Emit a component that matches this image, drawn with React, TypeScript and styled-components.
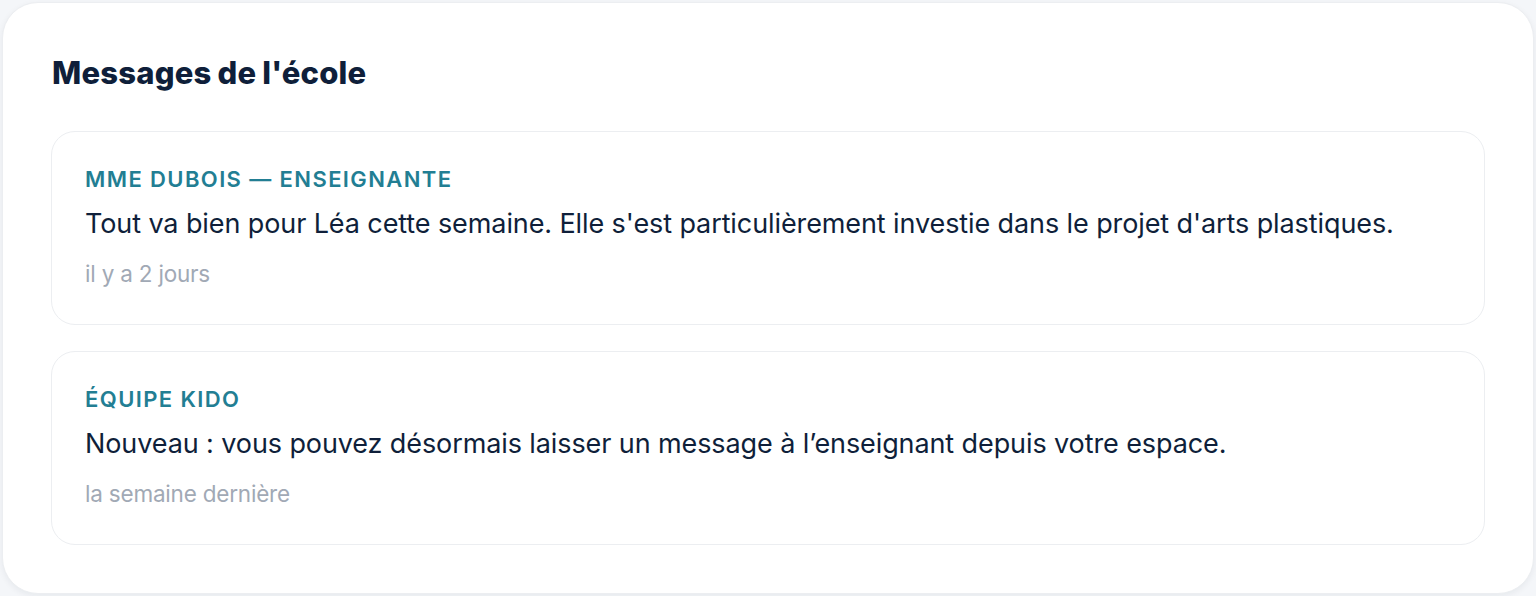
import React from "react";
import styled, { createGlobalStyle } from "styled-components";

const Global = createGlobalStyle`
  html, body { margin: 0; padding: 0; background: #f4f6f9; }
  body { font-family: Inter, "Noto Sans", sans-serif; -webkit-font-smoothing: antialiased; }
  * { box-sizing: border-box; }
`;

const Page = styled.div`
  padding: 2px;
  height: 596px;
`;

const Panel = styled.section`
  height: 592px;
  background: #ffffff;
  border: 1px solid #eceef1;
  border-radius: 36px;
  box-shadow: 0 2px 6px rgba(15, 30, 55, 0.06);
  padding: 50px 48px 47px 48px;
  display: flex;
  flex-direction: column;
`;

const Title = styled.h2`
  margin: 0 0 38px 1px;
  font-family: Inter, sans-serif;
  font-size: 31px;
  line-height: 40px;
  font-weight: 800;
  letter-spacing: 0.2px;
  word-spacing: -1px;
  color: #0f1f3a;
`;

const List = styled.div`
  display: flex;
  flex-direction: column;
  gap: 26px;
`;

const Card = styled.article`
  height: 194px;
  border: 1px solid #eceef1;
  border-radius: 24px;
  padding: 32px 33px 0 33px;
  display: flex;
  flex-direction: column;
`;

const Sender = styled.div`
  font-size: 22px;
  line-height: 30px;
  font-weight: 600;
  letter-spacing: 1.4px;
  text-transform: uppercase;
  color: #227e93;
`;

const Body = styled.p`
  margin: 12px 0 0 0;
  font-size: 27px;
  line-height: 36px;
  font-weight: 400;
  letter-spacing: -0.1px;
  color: #0f1f3a;
`;

const Time = styled.div`
  margin-top: 17px;
  font-size: 22.5px;
  line-height: 30px;
  letter-spacing: -0.2px;
  color: #a1a9b5;
`;

const messages = [
  {
    sender: "Mme Dubois — Enseignante",
    body: "Tout va bien pour Léa cette semaine. Elle s'est particulièrement investie dans le projet d'arts plastiques.",
    time: "il y a 2 jours",
  },
  {
    sender: "Équipe Kido",
    body: "Nouveau : vous pouvez désormais laisser un message à l’enseignant depuis votre espace.",
    time: "la semaine dernière",
  },
];

export default function App() {
  return (
    <Page>
      <Global />
      <Panel>
        <Title>Messages de l'école</Title>
        <List>
          {messages.map((m) => (
            <Card key={m.sender}>
              <Sender>{m.sender}</Sender>
              <Body>{m.body}</Body>
              <Time>{m.time}</Time>
            </Card>
          ))}
        </List>
      </Panel>
    </Page>
  );
}
